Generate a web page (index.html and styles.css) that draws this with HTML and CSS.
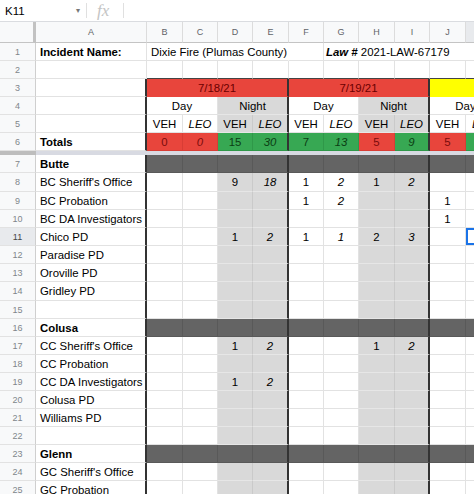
FILE: index.html
```html
<!DOCTYPE html>
<html lang="en">
<head>
    <meta charset="UTF-8">
    <meta name="viewport" content="width=device-width, initial-scale=1.0">
    <title>Dixie Fire - Law Enforcement</title>
    <link rel="stylesheet" href="styles.css">
</head>
<body>
    <!-- Строка формул -->
    <div class="formula-bar">
        <div class="name-box"><span>K11</span><span class="caret">▾</span></div>
        <div class="fx">fx</div>
        <div class="formula-input"></div>
    </div>

    <div class="sheet" id="sheet">
        <div class="row col-head">
            <div class="cell corner"></div>
            <div class="cell">A</div>
            <div class="cell">B</div>
            <div class="cell">C</div>
            <div class="cell">D</div>
            <div class="cell">E</div>
            <div class="cell">F</div>
            <div class="cell">G</div>
            <div class="cell">H</div>
            <div class="cell">I</div>
            <div class="cell">J</div>
            <div class="cell active">K</div>
        </div>

        <div class="row">
            <div class="cell num">1</div>
            <div class="cell label bold">Incident Name:</div>
            <div class="cell text span4">Dixie Fire (Plumas County)</div>
            <div class="cell"></div>
            <div class="cell text law span5"><b><i>Law #</i></b>&nbsp;2021-LAW-67179</div>
        </div>

        <div class="row">
            <div class="cell num">2</div>
            <div class="cell label"></div>
            <div class="cell edge"></div><div class="cell edge"></div><div class="cell edge"></div><div class="cell edge"></div><div class="cell edge"></div>
            <div class="cell edge"></div><div class="cell edge"></div><div class="cell edge"></div><div class="cell edge"></div><div class="cell edge"></div>
        </div>

        <div class="row">
            <div class="cell num">3</div>
            <div class="cell label thick"></div>
            <div class="cell date span4 thick">7/18/21</div>
            <div class="cell date span4 thick">7/19/21</div>
            <div class="cell date-next span2"></div>
        </div>

        <div class="row">
            <div class="cell num">4</div>
            <div class="cell label thick"></div>
            <div class="cell span2">Day</div>
            <div class="cell night span2 thick">Night</div>
            <div class="cell span2">Day</div>
            <div class="cell night span2 thick">Night</div>
            <div class="cell span2">Day</div>
        </div>

        <div class="row">
            <div class="cell num">5</div>
            <div class="cell label thick"></div>
            <div class="cell">VEH</div>
            <div class="cell leo">LEO</div>
            <div class="cell night">VEH</div>
            <div class="cell night leo thick">LEO</div>
            <div class="cell">VEH</div>
            <div class="cell leo">LEO</div>
            <div class="cell night">VEH</div>
            <div class="cell night leo thick">LEO</div>
            <div class="cell">VEH</div>
            <div class="cell leo">LEO</div>
        </div>

        <div class="row">
            <div class="cell num">6</div>
            <div class="cell label bold thick">Totals</div>
            <div class="cell low">0</div>
            <div class="cell low leo">0</div>
            <div class="cell high">15</div>
            <div class="cell high leo thick">30</div>
            <div class="cell high">7</div>
            <div class="cell high leo">13</div>
            <div class="cell low">5</div>
            <div class="cell high leo thick">9</div>
            <div class="cell low">5</div>
            <div class="cell high leo"></div>
        </div>

        <div class="freeze">
            <div class="freeze-num"></div>
            <div class="freeze-bar"></div>
        </div>
    </div>

    <script>
        // Строки по округам
        const rows = [
            { n: 7, label: 'Butte', dark: true },
            { n: 8, label: "BC Sheriff's Office", tall: true, v: { D: '9', E: '18', F: '1', G: '2', H: '1', I: '2' } },
            { n: 9, label: 'BC Probation', v: { F: '1', G: '2', J: '1' } },
            { n: 10, label: 'BC DA Investigators', v: { J: '1' } },
            { n: 11, label: 'Chico PD', v: { D: '1', E: '2', F: '1', G: '1', H: '2', I: '3' } },
            { n: 12, label: 'Paradise PD' },
            { n: 13, label: 'Oroville PD' },
            { n: 14, label: 'Gridley PD', tall: true },
            { n: 15, label: '' },
            { n: 16, label: 'Colusa', dark: true },
            { n: 17, label: "CC Sheriff's Office", v: { D: '1', E: '2', H: '1', I: '2' } },
            { n: 18, label: 'CC Probation' },
            { n: 19, label: 'CC DA Investigators', v: { D: '1', E: '2' } },
            { n: 20, label: 'Colusa PD' },
            { n: 21, label: 'Williams PD' },
            { n: 22, label: '' },
            { n: 23, label: 'Glenn', dark: true },
            { n: 24, label: "GC Sheriff's Office" },
            { n: 25, label: 'GC Probation' },
        ];

        const letters = ['A', 'B', 'C', 'D', 'E', 'F', 'G', 'H', 'I', 'J', 'K'];
        const night = ['D', 'E', 'H', 'I'];
        const leo = ['C', 'E', 'G', 'I', 'K'];
        const thick = ['A', 'E', 'I'];
        const sheet = document.getElementById('sheet');

        rows.forEach(r => {
            const row = document.createElement('div');
            row.className = 'row' + (r.tall ? ' tall' : '');

            const num = document.createElement('div');
            num.className = 'cell num' + (r.n === 11 ? ' active' : '');
            num.textContent = r.n;
            row.appendChild(num);

            letters.forEach(l => {
                const cell = document.createElement('div');
                cell.classList.add('cell');
                if (l === 'A') {
                    cell.classList.add('label');
                    if (r.dark) cell.classList.add('bold');
                    cell.textContent = r.label;
                } else {
                    if (r.dark) cell.classList.add('dark');
                    else if (night.includes(l)) cell.classList.add('night');
                    if (leo.includes(l)) cell.classList.add('leo');
                    if (r.v && r.v[l]) cell.textContent = r.v[l];
                }
                if (thick.includes(l)) cell.classList.add('thick');
                if (r.n === 11 && l === 'K') cell.classList.add('selected');
                row.appendChild(cell);
            });

            sheet.appendChild(row);
        });
    </script>
</body>
</html>
```

FILE: styles.css
```css
/* Основные стили */
body {
    margin: 0;
    font-family: "Liberation Sans", Arial, sans-serif;
    font-size: 11.4px;
    color: #000;
    background: #fff;
    overflow: hidden;
}

/* Строка формул */
.formula-bar {
    display: flex;
    align-items: center;
    height: 22px;
    border-bottom: 1px solid #dadce0;
    box-sizing: border-box;
}
.name-box {
    width: 87px;
    height: 15px;
    padding: 0 6px 0 5px;
    box-sizing: border-box;
    display: flex;
    justify-content: space-between;
    align-items: center;
    font-size: 11.5px;
    border-right: 1px solid #e0e0e0;
}
.caret {
    color: #777;
    font-size: 8px;
}
.fx {
    width: 37px;
    height: 15px;
    padding-left: 10px;
    box-sizing: border-box;
    display: flex;
    align-items: center;
    color: #c4c4c4;
    font-family: "Liberation Serif", serif;
    font-style: italic;
    font-size: 17px;
    border-right: 1px solid #e0e0e0;
}

/* Таблица */
.row {
    display: grid;
    grid-template-columns: 36px 111px 36px 35px 35px 36px 35px 35px 36px 35px 36px 36px;
    height: 18px;
}
.row.tall {
    height: 19px;
}
.cell {
    box-sizing: border-box;
    border-right: 1px solid #e2e2e2;
    border-bottom: 1px solid #e2e2e2;
    display: flex;
    align-items: center;
    justify-content: center;
    white-space: nowrap;
    overflow: hidden;
}
.span2 { grid-column: span 2; }
.span4 { grid-column: span 4; }
.span5 { grid-column: span 5; }

.col-head {
    height: 21px;
}
.col-head .cell {
    background: #f8f9fa;
    color: #5f6368;
    font-size: 9px;
    border-bottom-color: #c4c4c4;
    border-right-color: #dcdcdc;
}
.col-head .cell.corner {
    border-right: 3px solid #c2c2c2;
}
.col-head .cell.active {
    background: #e8eaed;
}
.num {
    background: #f8f9fa;
    color: #80868b;
    font-size: 9px;
    border-right-color: #cfcfcf;
}
.num.active {
    background: #e8eaed;
    color: #444;
}

.label {
    justify-content: flex-start;
    padding-left: 4px;
}
.text {
    justify-content: flex-start;
    padding-left: 4px;
    overflow: visible;
    border-right-color: transparent;
}
.law {
    padding-left: 2px;
}
.bold {
    font-weight: bold;
}
.leo {
    font-style: italic;
}
.cell.edge {
    border-bottom-color: #444;
}

/* Даты, день/ночь, итоги */
.date {
    background: #e8453c;
    color: #6b0000;
    border-bottom-color: #e8453c;
}
.date-next {
    background: #ffff00;
    border-bottom-color: #ffff00;
}
.night {
    background: #d9d9d9;
    border-right-color: #cacaca;
    border-bottom-color: #e6e6e6;
}
.low {
    background: #e8453c;
    color: #7a0c0c;
    border-right-color: #d83d35;
    border-bottom-color: #d83d35;
}
.high {
    background: #37a853;
    color: #0b3d14;
    border-right-color: #2f9849;
    border-bottom-color: #2f9849;
}
.dark {
    background: #646464;
    border-right-color: #595959;
    border-bottom-color: #595959;
}
.cell.thick {
    border-right: 2px solid #333;
}
.selected {
    box-shadow: inset 0 0 0 2px #1a73e8;
}

/* Линия закрепления */
.freeze {
    display: grid;
    grid-template-columns: 36px 1fr;
    height: 4px;
}
.freeze-num {
    background: #bdbdbd;
}
.freeze-bar {
    background: #d8dae2;
}
```
